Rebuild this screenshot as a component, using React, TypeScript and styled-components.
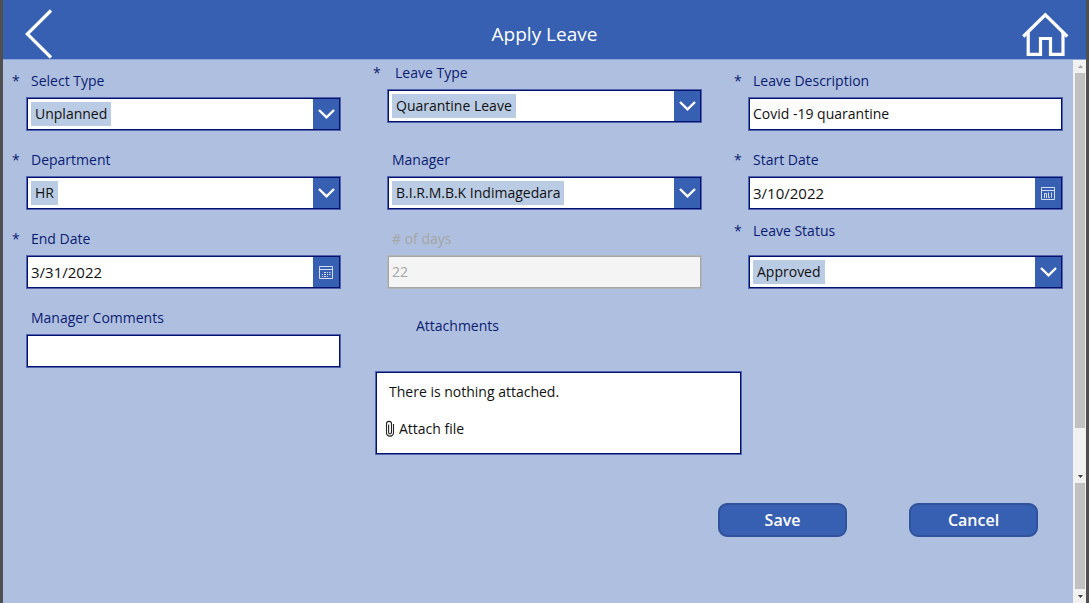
import React from "react";
import styled, { createGlobalStyle } from "styled-components";

const color = {
  brand: "#3860b2",
  surface: "#afbfdf",
  ink: "#001270",
  edge: "#5465ad",
  label: "#0a1c72",
  muted: "#a6a6a6",
  chip: "#bacbe4",
};

const GlobalStyle = createGlobalStyle`
  *, *::before, *::after { box-sizing: border-box; }
  body {
    margin: 0;
    background: #505050;
    font-family: "Open Sans", "Noto Sans", sans-serif;
    font-size: 14px;
    line-height: 20px;
    color: #111;
  }
  button, input, select { font: inherit; color: inherit; margin: 0; }
`;

const Screen = styled.div`
  display: flex;
  flex-direction: column;
  min-height: 100vh;
  margin: 0 3px;
  background: ${color.surface};
`;

const Header = styled.header`
  display: flex;
  align-items: center;
  justify-content: space-between;
  height: 60px;
  padding: 0 17px;
  background: ${color.brand};
  border-bottom: 1px solid #8ba3d8;
  color: #fff;
`;

const Title = styled.h1`
  margin: 0;
  padding-top: 8px;
  font-size: 19px;
  line-height: 28px;
  font-weight: 400;
`;

const HeaderButton = styled.button`
  display: flex;
  width: 48px;
  height: 59px;
  padding: 0;
  border: 0;
  background: none;
`;

const Section = styled.div<{ $fill?: boolean }>`
  display: flex;
  flex: ${(p) => (p.$fill ? "1 0 auto" : "none")};
`;

const FormGrid = styled.form`
  flex: 1;
  display: grid;
  grid-template-columns: repeat(3, minmax(0, 1fr));
  grid-auto-rows: minmax(68px, auto);
  align-items: end;
  gap: 11px 32px;
  padding: 3px 10px 28px 9px;
`;

const Field = styled.div<{ $raised?: boolean; $gap?: number }>`
  display: grid;
  grid-template-columns: 14px minmax(0, 1fr);
  row-gap: ${(p) => p.$gap ?? 6}px;
  align-self: ${(p) => (p.$raised ? "start" : "end")};
`;

const Star = styled.span`
  color: ${color.label};
`;

const Label = styled.label<{ $indent?: number; $muted?: boolean }>`
  padding-left: ${(p) => p.$indent ?? 5}px;
  color: ${(p) => (p.$muted ? color.muted : color.label)};
`;

const Box = styled.div<{ $muted?: boolean }>`
  grid-column: 2;
  display: flex;
  height: 34px;
  padding: 1px;
  background: ${(p) => (p.$muted ? "#f4f4f4" : "#fff")};
  border: 1px solid ${(p) => (p.$muted ? "#b3b4b8" : color.edge)};
  box-shadow: inset 0 0 0 1px ${(p) => (p.$muted ? color.muted : color.ink)};
`;

const TextInput = styled.input<{ $large?: boolean }>`
  flex: 1;
  min-width: 0;
  padding: 0 3px;
  border: 0;
  outline: 0;
  background: transparent;
  font-size: ${(p) => (p.$large ? 15 : 14)}px;
  &:disabled { color: ${color.muted}; }
`;

const Choice = styled.select`
  appearance: none;
  field-sizing: content;
  align-self: center;
  height: 24px;
  margin: 0 auto 0 3px;
  padding: 0 4px;
  border: 0;
  border-radius: 0;
  background: ${color.chip};
`;

const Arrow = styled.span`
  display: flex;
  width: 26px;
  align-items: center;
  justify-content: center;
  background: ${color.brand};
`;

const DateButton = styled.button`
  display: flex;
  width: 26px;
  padding: 0;
  align-items: center;
  justify-content: center;
  border: 0;
  background: ${color.brand};
`;

const Attachments = styled.section`
  grid-column: 2 / span 2;
  grid-row: 4 / span 2;
  align-self: start;
  width: calc(50% + 24px);
  padding: 16px 0 0 2px;
`;

const AttachTitle = styled.h2`
  margin: 0 0 35px;
  padding-left: 41px;
  font-size: 14px;
  line-height: 20px;
  font-weight: 400;
  color: ${color.label};
`;

const AttachBox = styled.div`
  display: flex;
  flex-direction: column;
  align-items: flex-start;
  gap: 17px;
  height: 84px;
  padding: 10px 9px;
  background: #fff;
  border: 1px solid ${color.edge};
  box-shadow: inset 0 0 0 1px ${color.ink};
`;

const AttachText = styled.p`
  margin: 0;
  padding-left: 4px;
`;

const AttachButton = styled.button`
  display: flex;
  align-items: center;
  gap: 4px;
  padding: 0;
  border: 0;
  background: none;
`;

const Actions = styled.div`
  flex: 1;
  display: flex;
  align-items: flex-start;
  justify-content: flex-end;
  gap: 62px;
  padding: 20px 35px 20px 0;
`;

const ActionButton = styled.button`
  width: 129px;
  height: 34px;
  padding: 0;
  border: 2px solid #2f529b;
  border-radius: 9px;
  background: ${color.brand};
  color: #fff;
  font-size: 16px;
  font-weight: 600;
`;

const Rail = styled.div`
  display: flex;
  flex-direction: column;
  align-items: center;
  width: 13px;
  padding: 0 1px 0 2px;
  background: #f1f1f1;
`;

const Thumb = styled.div<{ $size: number }>`
  flex: 0 1 ${(p) => p.$size}%;
  width: 10px;
  background: #c1c1c1;
`;

const RailEnd = styled.span<{ $push?: boolean }>`
  display: flex;
  align-items: center;
  justify-content: center;
  height: 13px;
  margin-top: ${(p) => (p.$push ? "auto" : "0")};
`;

const Chevron = () => (
  <svg width="18" height="12" viewBox="0 0 18 12" fill="none" stroke="#fff" strokeWidth="2.4" aria-hidden="true">
    <path d="M2 2 9.5 9.4 17 2" />
  </svg>
);

const CalendarIcon = ({ clipped }: { clipped?: boolean }) => (
  <svg width="14" height="13" viewBox="0 0 14 13" fill="none" stroke="#d5def0" aria-hidden="true">
    <path d="M.5.5h13v12H.5zM.5 3.5h13" />
    {clipped ? (
      <path d="M3.5 11V6.5H5.5V11M7.5 5.5V10.5H9M10.5 5.5V10.5" />
    ) : (
      <path d="M5 6.5h2M8 6.5h1M10 6.5h1.5M3 8.5h1M5 8.5h2M8 8.5h1M10 8.5h1.5M3 10.5h1M5 10.5h2M8 10.5h1" />
    )}
  </svg>
);

const ClipIcon = () => (
  <svg width="10" height="18" viewBox="0 0 10 18" fill="none" stroke="#222" strokeWidth="1.1" aria-hidden="true">
    <path d="M8.5 4v8.5a3.3 3.3 0 0 1-3.5 3.6 3.3 3.3 0 0 1-3.5-3.6V3.6a2.4 2.4 0 0 1 2.5-2.2 2.4 2.4 0 0 1 2.5 2.2v8.6a1.4 1.4 0 0 1-1.5 1.5 1.4 1.4 0 0 1-1.4-1.5V4.5" />
  </svg>
);

const Triangle = ({ up }: { up?: boolean }) => (
  <svg width="5" height="3" viewBox="0 0 5 3" aria-hidden="true">
    <path d={up ? "M0 3 2.5 0 5 3z" : "M0 0h5L2.5 3z"} fill={up ? "#a3a3a3" : "#404040"} />
  </svg>
);

type FieldProps = {
  id: string;
  label: string;
  value: string;
  required?: boolean;
  disabled?: boolean;
  raised?: boolean;
  indent?: number;
  gap?: number;
};

const FieldShell = ({ id, label, required, disabled, raised, indent, gap, children }: Omit<FieldProps, "value"> & { children: React.ReactNode }) => (
  <Field $raised={raised} $gap={gap}>
    <Star aria-hidden="true">{required ? "*" : ""}</Star>
    <Label htmlFor={id} $indent={indent} $muted={disabled}>
      {label}
    </Label>
    <Box $muted={disabled}>{children}</Box>
  </Field>
);

const SelectField = ({ value, ...rest }: FieldProps) => (
  <FieldShell {...rest}>
    <Choice id={rest.id} defaultValue={value} required={rest.required}>
      <option>{value}</option>
    </Choice>
    <Arrow>
      <Chevron />
    </Arrow>
  </FieldShell>
);

const TextField = ({ value, ...rest }: FieldProps) => (
  <FieldShell {...rest}>
    <TextInput id={rest.id} type="text" defaultValue={value} disabled={rest.disabled} />
  </FieldShell>
);

const DateField = ({ value, clipped, ...rest }: FieldProps & { clipped?: boolean }) => (
  <FieldShell {...rest}>
    <TextInput id={rest.id} type="text" defaultValue={value} $large />
    <DateButton type="button" aria-label={`Choose ${rest.label}`}>
      <CalendarIcon clipped={clipped} />
    </DateButton>
  </FieldShell>
);

export default function App() {
  return (
    <>
      <GlobalStyle />
      <Screen>
        <Header>
          <HeaderButton type="button" aria-label="Back">
            <svg width="48" height="59" viewBox="0 0 48 59" fill="none" stroke="#fff" strokeWidth="3.2">
              <path d="M31 10.5 7.3 34 31 57.5" />
            </svg>
          </HeaderButton>
          <Title>Apply Leave</Title>
          <HeaderButton type="button" aria-label="Home">
            <svg width="48" height="59" viewBox="0 0 48 59" fill="none" stroke="#fff" strokeWidth="3.2">
              <path d="M2.3 36.5 24.3 14.8 46.3 36.5" />
              <path d="M7.2 32.5V54.3H19.5V38.5H29.5V54.3H42V32.5" />
            </svg>
          </HeaderButton>
        </Header>
        <Section>
          <FormGrid id="leave-form">
            <SelectField id="type" label="Select Type" value="Unplanned" required />
            <SelectField id="leave-type" label="Leave Type" value="Quarantine Leave" required raised indent={8} />
            <TextField id="description" label="Leave Description" value="Covid -19 quarantine" required />
            <SelectField id="department" label="Department" value="HR" required />
            <SelectField id="manager" label="Manager" value="B.I.R.M.B.K Indimagedara" />
            <DateField id="start" label="Start Date" value="3/10/2022" required clipped />
            <DateField id="end" label="End Date" value="3/31/2022" required />
            <TextField id="days" label="# of days" value="22" disabled />
            <SelectField id="status" label="Leave Status" value="Approved" required gap={14} />
            <TextField id="comments" label="Manager Comments" value="" />
            <Attachments>
              <AttachTitle>Attachments</AttachTitle>
              <AttachBox>
                <AttachText>There is nothing attached.</AttachText>
                <AttachButton type="button">
                  <ClipIcon />
                  Attach file
                </AttachButton>
              </AttachBox>
            </Attachments>
          </FormGrid>
          <Rail aria-hidden="true">
            <RailEnd>
              <Triangle up />
            </RailEnd>
            <Thumb $size={84} />
            <RailEnd $push>
              <Triangle />
            </RailEnd>
          </Rail>
        </Section>
        <Section $fill>
          <Actions>
            <ActionButton type="submit" form="leave-form">Save</ActionButton>
            <ActionButton type="button">Cancel</ActionButton>
          </Actions>
          <Rail aria-hidden="true">
            <Thumb $size={88} />
            <RailEnd $push>
              <Triangle />
            </RailEnd>
          </Rail>
        </Section>
      </Screen>
    </>
  );
}
